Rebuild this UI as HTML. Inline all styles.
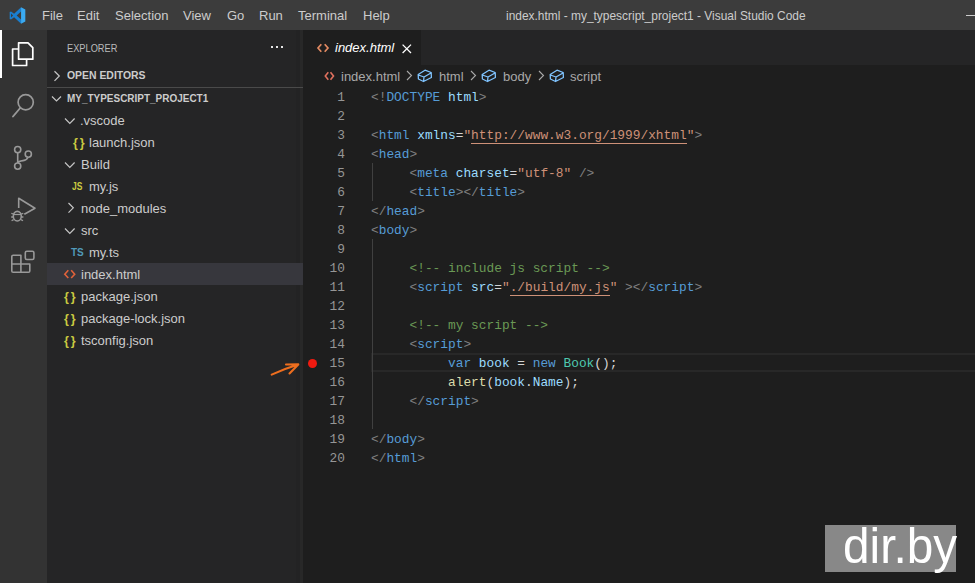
<!DOCTYPE html>
<html><head><meta charset="utf-8">
<style>
*{margin:0;padding:0;box-sizing:border-box}
html,body{width:975px;height:583px;overflow:hidden;background:#1e1e1e;font-family:"Liberation Sans",sans-serif;position:relative}
.abs{position:absolute;white-space:pre}
svg{position:absolute;overflow:visible}
#title{left:0;top:0;width:975px;height:30px;background:#3c3c3c}
.menu{position:absolute;top:8px;font-size:13px;color:#cccccc;white-space:pre;line-height:15px}
#act{left:0;top:30px;width:47px;height:553px;background:#333333}
#side{left:47px;top:30px;width:256px;height:553px;background:#252526}
#tabs{left:303px;top:30px;width:672px;height:35px;background:#252526}
#tab{left:303px;top:30px;width:118px;height:35px;background:#1e1e1e}
.row{position:absolute;left:47px;width:256px;height:22px;font-size:13px;color:#cccccc;line-height:22px;white-space:pre}
.row span.tx{position:absolute;top:0}
.code{position:absolute;left:371px;font-family:"Liberation Mono",monospace;font-size:12.83px;line-height:19px;height:19px;white-space:pre;color:#d4d4d4}
.ln{position:absolute;font-family:"Liberation Mono",monospace;font-size:12.83px;line-height:19px;color:#969696;text-align:right;width:50px;left:295px}
.t{color:#808080}.n{color:#569cd6}.a{color:#9cdcfe}.s{color:#ce9178}.c{color:#6a9955}.k{color:#569cd6}.cl{color:#4ec9b0}.f{color:#dcdcaa}.u{}
</style></head><body>
<div id="title" class="abs"></div>
<!-- vscode logo -->
<svg style="left:9px;top:7px" width="17" height="17" viewBox="0 0 100 100">
<path d="M71 2 L30 40 L12 26 L4 30 V70 L12 74 L30 60 L71 98 L71 73 L45 50 L71 27 Z M12 38 V62 L24 50 Z" fill="#1a7fd0" fill-rule="evenodd"/>
<path d="M71 2 L96 14 V86 L71 98 Z" fill="#3aaaf2"/>
</svg>
<div class="menu" style="left:42px">File</div>
<div class="menu" style="left:77px">Edit</div>
<div class="menu" style="left:115px">Selection</div>
<div class="menu" style="left:183px">View</div>
<div class="menu" style="left:227px">Go</div>
<div class="menu" style="left:259px">Run</div>
<div class="menu" style="left:298px">Terminal</div>
<div class="menu" style="left:363px">Help</div>
<div class="menu" style="left:506px;transform:scaleX(0.918);transform-origin:0 0">index.html - my_typescript_project1 - Visual Studio Code</div>
<div class="abs" style="left:966px;top:15px;width:9px;height:1px;background:#cccccc"></div>

<div id="act" class="abs"></div>
<div class="abs" style="left:0;top:30px;width:2px;height:48px;background:#ffffff"></div>
<!-- explorer icon -->
<svg style="left:0;top:30px" width="47" height="48">
<path d="M18.6 12.8 H28 L32.8 17.6 V29.2 H18.6 Z" fill="none" stroke="#fff" stroke-width="1.7" stroke-linejoin="round"/>
<path d="M18.6 19 H12.6 V35.5 H26.6 V29.2" fill="none" stroke="#fff" stroke-width="1.7" stroke-linejoin="round"/>
</svg>
<!-- search -->
<svg style="left:0;top:80px" width="47" height="48">
<circle cx="25.7" cy="22.3" r="7.6" fill="none" stroke="#999" stroke-width="1.7"/>
<path d="M20.2 28 L13 36.5" stroke="#999" stroke-width="1.9" stroke-linecap="round"/>
</svg>
<!-- source control -->
<svg style="left:0;top:130px" width="47" height="48">
<circle cx="17.7" cy="19.6" r="3.1" fill="none" stroke="#999" stroke-width="1.6"/>
<circle cx="28.3" cy="24.1" r="3.1" fill="none" stroke="#999" stroke-width="1.6"/>
<circle cx="17.7" cy="36.1" r="3.1" fill="none" stroke="#999" stroke-width="1.6"/>
<path d="M17.7 22.7 V33 M28 27.2 Q27 30 23 30.6 Q18.5 31.2 17.7 33" fill="none" stroke="#999" stroke-width="1.6"/>
</svg>
<!-- debug -->
<svg style="left:0;top:180px" width="47" height="48">
<path d="M18.7 28 V18.2 L35 28.2 L24.3 34.2" fill="none" stroke="#999" stroke-width="1.6" stroke-linejoin="round"/>
<ellipse cx="17.3" cy="36.2" rx="4" ry="4.8" fill="none" stroke="#999" stroke-width="1.6"/>
<path d="M13.5 34.5 H21" stroke="#999" stroke-width="1.2"/>
<path d="M11.3 33.3 L13.4 34 M23.3 33.3 L21.2 34 M11.2 37 H13.2 M23.4 37 H21.4 M11.6 40.8 L13.6 39.6 M23 40.8 L21 39.6" stroke="#999" stroke-width="1.3"/>
</svg>
<!-- extensions -->
<svg style="left:0;top:230px" width="47" height="48">
<path d="M11.8 26.5 Q11.8 25.2 13.1 25.2 H20.9 V34 H29.8 V40.9 Q29.8 42.2 28.5 42.2 H13.1 Q11.8 42.2 11.8 40.9 Z M11.8 34 H20.9 V42.2" fill="none" stroke="#999" stroke-width="1.6" stroke-linejoin="round"/>
<rect x="25.3" y="21.2" width="8.6" height="8.3" rx="1.5" fill="none" stroke="#999" stroke-width="1.6"/>
</svg>

<div id="side" class="abs"></div>
<div class="abs" style="left:296px;top:30px;width:4px;height:553px;background:#232324"></div>
<div class="abs" style="left:300px;top:30px;width:3px;height:553px;background:#282828"></div>
<div class="abs" style="left:67px;top:42px;font-size:11px;color:#bbbbbb;line-height:13px;transform:scaleX(0.84);transform-origin:0 0">EXPLORER</div>
<div class="abs" style="left:271px;top:46px;width:2px;height:2px;background:#e6e6e6"></div>
<div class="abs" style="left:276px;top:46px;width:2px;height:2px;background:#e6e6e6"></div>
<div class="abs" style="left:281px;top:46px;width:2px;height:2px;background:#e6e6e6"></div>
<svg style="left:53px;top:70px" width="8" height="12"><path d="M1.5 1.3 L6.3 6 L1.5 10.8" fill="none" stroke="#c5c5c5" stroke-width="1.2"/></svg>
<div class="abs" style="left:67px;top:69px;font-size:11px;font-weight:bold;color:#cccccc;line-height:13px;transform:scaleX(0.947);transform-origin:0 0">OPEN EDITORS</div>
<div class="abs" style="left:47px;top:87px;width:256px;height:1px;background:#4a4a4a"></div>
<svg style="left:51px;top:95px" width="12" height="8"><path d="M1 1.5 L5.5 6 L10 1.5" fill="none" stroke="#c5c5c5" stroke-width="1.2"/></svg>
<div class="abs" style="left:67px;top:92px;font-size:11px;font-weight:bold;color:#cccccc;line-height:13px;transform:scaleX(0.906);transform-origin:0 0">MY_TYPESCRIPT_PROJECT1</div>

<div class="abs" style="left:47px;top:263px;width:256px;height:22px;background:#37373d"></div>

<!-- tree rows -->
<svg style="left:64px;top:117px" width="12" height="8"><path d="M1 1.5 L5.8 6.3 L10.6 1.5" fill="none" stroke="#c5c5c5" stroke-width="1.2"/></svg>
<div class="row" style="top:110px"><span class="tx" style="left:33px">.vscode</span></div>
<div class="abs" style="left:73px;top:132px;font-size:12.5px;line-height:22px;color:#cbcb41;font-weight:bold;letter-spacing:2px">{}</div>
<div class="row" style="top:132px"><span class="tx" style="left:42px">launch.json</span></div>
<svg style="left:64px;top:161px" width="12" height="8"><path d="M1 1.5 L5.8 6.3 L10.6 1.5" fill="none" stroke="#c5c5c5" stroke-width="1.2"/></svg>
<div class="row" style="top:154px"><span class="tx" style="left:34px">Build</span></div>
<div class="abs" style="left:72px;top:176px;font-size:10px;line-height:22px;color:#cbcb41;font-weight:bold;transform:scaleX(0.85);transform-origin:0 0">JS</div>
<div class="row" style="top:176px"><span class="tx" style="left:42px">my.js</span></div>
<svg style="left:67px;top:202px" width="8" height="12"><path d="M1.5 1 L6.3 5.8 L1.5 10.6" fill="none" stroke="#c5c5c5" stroke-width="1.2"/></svg>
<div class="row" style="top:198px"><span class="tx" style="left:34px">node_modules</span></div>
<svg style="left:64px;top:227px" width="12" height="8"><path d="M1 1.5 L5.8 6.3 L10.6 1.5" fill="none" stroke="#c5c5c5" stroke-width="1.2"/></svg>
<div class="row" style="top:220px"><span class="tx" style="left:34px">src</span></div>
<div class="abs" style="left:71px;top:242px;font-size:10px;line-height:22px;color:#519aba;font-weight:bold">TS</div>
<div class="row" style="top:242px"><span class="tx" style="left:42px">my.ts</span></div>
<svg style="left:63px;top:268px" width="14" height="12"><path d="M5.3 2.3 L1.8 6.2 L5.3 10 M8.2 2.3 L11.7 6.2 L8.2 10" fill="none" stroke="#e0623a" stroke-width="1.6"/></svg>
<div class="row" style="top:264px"><span class="tx" style="left:34px">index.html</span></div>
<div class="abs" style="left:64px;top:286px;font-size:12.5px;line-height:22px;color:#cbcb41;font-weight:bold;letter-spacing:2px">{}</div>
<div class="row" style="top:286px"><span class="tx" style="left:34px">package.json</span></div>
<div class="abs" style="left:64px;top:308px;font-size:12.5px;line-height:22px;color:#cbcb41;font-weight:bold;letter-spacing:2px">{}</div>
<div class="row" style="top:308px"><span class="tx" style="left:34px">package-lock.json</span></div>
<div class="abs" style="left:64px;top:330px;font-size:12.5px;line-height:22px;color:#cbcb41;font-weight:bold;letter-spacing:2px">{}</div>
<div class="row" style="top:330px"><span class="tx" style="left:34px">tsconfig.json</span></div>

<!-- tabs -->
<div id="tabs" class="abs"></div>
<div id="tab" class="abs"></div>
<svg style="left:315px;top:42px" width="16" height="12"><path d="M6.3 2.2 L3 6 L6.3 9.8 M9.7 2.2 L13 6 L9.7 9.8" fill="none" stroke="#e28a62" stroke-width="1.7"/></svg>
<div class="abs" style="left:335px;top:40px;font-size:13px;font-style:italic;color:#ffffff;line-height:15px">index.html</div>
<svg style="left:401.5px;top:43.5px" width="10" height="10"><path d="M0.6 0.6 L9 9 M9 0.6 L0.6 9" stroke="#ffffff" stroke-width="1.3"/></svg>

<!-- breadcrumbs -->
<svg style="left:323.5px;top:71px" width="12" height="10"><path d="M4.3 1.3 L1.3 5 L4.3 8.7 M6.5 1.3 L9.5 5 L6.5 8.7" fill="none" stroke="#e0705e" stroke-width="1.6"/></svg>
<div class="abs" style="left:341px;top:69px;font-size:13px;color:#a9a9a9;line-height:15px">index.html</div>
<svg style="left:406px;top:70px" width="7" height="12"><path d="M1 1 L5.5 5.5 L1 10" fill="none" stroke="#a9a9a9" stroke-width="1.1"/></svg>
<svg style="left:417px;top:69px" width="16" height="14"><path d="M1.2 5.5 L8 1.2 L14.2 3.5 L14.4 8.5 L6.5 12.5 L1.4 10 Z M1.4 6 L7 8 L14 4 M7 8 L6.5 12.5" fill="none" stroke="#80c4ff" stroke-width="1.3" stroke-linejoin="round"/></svg>
<div class="abs" style="left:439px;top:69px;font-size:13px;color:#a9a9a9;line-height:15px">html</div>
<svg style="left:470px;top:70px" width="7" height="12"><path d="M1 1 L5.5 5.5 L1 10" fill="none" stroke="#a9a9a9" stroke-width="1.1"/></svg>
<svg style="left:481px;top:69px" width="16" height="14"><path d="M1.2 5.5 L8 1.2 L14.2 3.5 L14.4 8.5 L6.5 12.5 L1.4 10 Z M1.4 6 L7 8 L14 4 M7 8 L6.5 12.5" fill="none" stroke="#80c4ff" stroke-width="1.3" stroke-linejoin="round"/></svg>
<div class="abs" style="left:503px;top:69px;font-size:13px;color:#a9a9a9;line-height:15px">body</div>
<svg style="left:538px;top:70px" width="7" height="12"><path d="M1 1 L5.5 5.5 L1 10" fill="none" stroke="#a9a9a9" stroke-width="1.1"/></svg>
<svg style="left:549px;top:69px" width="16" height="14"><path d="M1.2 5.5 L8 1.2 L14.2 3.5 L14.4 8.5 L6.5 12.5 L1.4 10 Z M1.4 6 L7 8 L14 4 M7 8 L6.5 12.5" fill="none" stroke="#80c4ff" stroke-width="1.3" stroke-linejoin="round"/></svg>
<div class="abs" style="left:570px;top:69px;font-size:13px;color:#a9a9a9;line-height:15px">script</div>

<!-- current line box -->
<div class="abs" style="left:371px;top:353px;width:604px;height:19px;border:2px solid #282828;border-right:none"></div>
<!-- indent guides -->
<div class="abs" style="left:372px;top:163px;width:1px;height:38px;background:#404040"></div>
<div class="abs" style="left:372px;top:239px;width:1px;height:190px;background:#404040"></div>

<!-- line numbers -->
<div class="ln" style="top:88px">1<br>2<br>3<br>4<br>5<br>6<br>7<br>8<br>9<br>10<br>11<br>12<br>13<br>14<br>15<br>16<br>17<br>18<br>19<br>20</div>

<!-- code -->
<div class="code" style="top:88px"><span class="t">&lt;!</span><span class="n">DOCTYPE</span> <span class="a">html</span><span class="t">&gt;</span></div>
<div class="code" style="top:126px"><span class="t">&lt;</span><span class="n">html</span> <span class="a">xmlns</span>=<span class="s">"<span class="u">http://www.w3.org/1999/xhtml</span>"</span><span class="t">&gt;</span></div>
<div class="code" style="top:145px"><span class="t">&lt;</span><span class="n">head</span><span class="t">&gt;</span></div>
<div class="code" style="top:164px">     <span class="t">&lt;</span><span class="n">meta</span> <span class="a">charset</span>=<span class="s">"utf-8"</span> <span class="t">/&gt;</span></div>
<div class="code" style="top:183px">     <span class="t">&lt;</span><span class="n">title</span><span class="t">&gt;&lt;/</span><span class="n">title</span><span class="t">&gt;</span></div>
<div class="code" style="top:202px"><span class="t">&lt;/</span><span class="n">head</span><span class="t">&gt;</span></div>
<div class="code" style="top:221px"><span class="t">&lt;</span><span class="n">body</span><span class="t">&gt;</span></div>
<div class="code" style="top:259px">     <span class="c">&lt;!-- include js script --&gt;</span></div>
<div class="code" style="top:278px">     <span class="t">&lt;</span><span class="n">script</span> <span class="a">src</span>=<span class="s">"<span class="u">./build/my.js</span>"</span> <span class="t">&gt;&lt;/</span><span class="n">script</span><span class="t">&gt;</span></div>
<div class="code" style="top:316px">     <span class="c">&lt;!-- my script --&gt;</span></div>
<div class="code" style="top:335px">     <span class="t">&lt;</span><span class="n">script</span><span class="t">&gt;</span></div>
<div class="code" style="top:354px">          <span class="k">var</span> <span class="a">book</span> = <span class="k">new</span> <span class="cl">Book</span>();</div>
<div class="code" style="top:373px">          <span class="f">alert</span>(<span class="a">book</span>.<span class="a">Name</span>);</div>
<div class="code" style="top:392px">     <span class="t">&lt;/</span><span class="n">script</span><span class="t">&gt;</span></div>
<div class="code" style="top:430px"><span class="t">&lt;/</span><span class="n">body</span><span class="t">&gt;</span></div>
<div class="code" style="top:449px"><span class="t">&lt;/</span><span class="n">html</span><span class="t">&gt;</span></div>

<div class="abs" style="left:471px;top:143px;width:216px;height:1px;background:#ce9178"></div>
<div class="abs" style="left:510px;top:295px;width:100px;height:1px;background:#ce9178"></div>
<!-- breakpoint -->
<div class="abs" style="left:308.2px;top:358.7px;width:9px;height:9px;border-radius:50%;background:#f01a10"></div>
<!-- orange arrow -->
<svg style="left:0;top:0" width="975" height="583"><path d="M271.7 374.6 Q284 369 296 365.3 M286 364.5 L298.3 364.4 L289.5 373.4" fill="none" stroke="#ee6e1e" stroke-width="2.1" stroke-linecap="round" stroke-linejoin="round"/></svg>

<!-- watermark -->
<div class="abs" style="left:825px;top:525px;width:131px;height:47px;background:#888888"></div>
<div class="abs" style="left:843px;top:516px;font-size:50px;color:#ffffff;line-height:60px;transform:scaleX(0.955);transform-origin:0 0">dir.by</div>
</body></html>
